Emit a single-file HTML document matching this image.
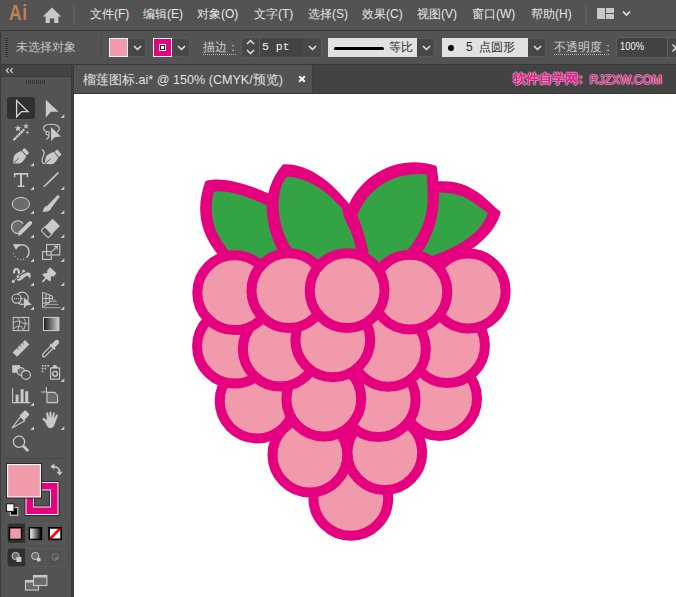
<!DOCTYPE html>
<html><head><meta charset="utf-8">
<style>
*{margin:0;padding:0;box-sizing:border-box}
html,body{width:676px;height:597px;overflow:hidden;background:#535353;font-family:"Liberation Sans",sans-serif}
.a{position:absolute}
.t{position:absolute;white-space:nowrap;line-height:1}
#menu{left:0;top:0;width:676px;height:30px;background:#535353}
#mline{left:0;top:30px;width:676px;height:1px;background:#393939}
#ctrl{left:0;top:31px;width:676px;height:33px;background:#535353}
#cline{left:0;top:64px;width:676px;height:1px;background:#393939}
#tabbar{left:73px;top:65px;width:603px;height:28px;background:#434343}
#tab{left:74px;top:65px;width:238px;height:28px;background:#535353}
#tline{left:73px;top:93px;width:603px;height:1px;background:#393939}
#canvas{left:74px;top:94px;width:602px;height:503px;background:#fff}
#gap{left:71px;top:65px;width:3px;height:532px;background:#383838;border-left:0;box-shadow:inset 1px 0 0 #383838}
#gapm{left:72px;top:65px;width:1px;height:532px;background:#414141}
#tbh{left:0;top:65px;width:71px;height:11px;background:#444444}
#tbl{left:0;top:76px;width:71px;height:1px;background:#393939}
#tbb{left:0;top:77px;width:71px;height:520px;background:#535353}
.menu{color:#e6e6e6;font-size:12px}
</style></head><body>
<div id="menu" class="a"></div>
<div id="mline" class="a"></div>
<div id="ctrl" class="a"></div>
<div id="cline" class="a"></div>
<div id="tabbar" class="a"></div>
<div id="tab" class="a"></div>
<div id="tline" class="a"></div>
<div id="gap" class="a"></div><div id="gapm" class="a"></div>
<div id="tbh" class="a"></div>
<div id="tbl" class="a"></div>
<div id="tbb" class="a"></div>
<div id="canvas" class="a"></div>

<!-- MENU -->
<div class="t" style="left:8.6px;top:3.4px;font-size:21.5px;font-weight:bold;color:#c08156;transform:scaleX(0.8);letter-spacing:1px;transform-origin:0 0">Ai</div>
<svg class="a" style="left:42px;top:7px" width="20" height="16" viewBox="0 0 20 16"><path d="M0.8 9.6 L10 0.4 L19.2 9.6 L16.4 9.6 L16.4 16 L12.2 16 L12.2 11.6 L7.8 11.6 L7.8 16 L3.6 16 L3.6 9.6 Z" fill="#c8c8c8"/></svg>
<div class="a" style="left:73px;top:5px;width:2px;height:20px;background:#5c5c5c"></div>
<div class="t menu" style="left:90px;top:8px">文件(F)</div>
<div class="t menu" style="left:143px;top:8px">编辑(E)</div>
<div class="t menu" style="left:197px;top:8px">对象(O)</div>
<div class="t menu" style="left:254px;top:8px">文字(T)</div>
<div class="t menu" style="left:308px;top:8px">选择(S)</div>
<div class="t menu" style="left:362px;top:8px">效果(C)</div>
<div class="t menu" style="left:417px;top:8px">视图(V)</div>
<div class="t menu" style="left:472px;top:8px">窗口(W)</div>
<div class="t menu" style="left:531px;top:8px">帮助(H)</div>
<div class="a" style="left:585px;top:5px;width:2px;height:20px;background:#5c5c5c"></div>
<div class="a" style="left:597px;top:8px;width:8px;height:11px;background:#c8c8c8"></div>
<div class="a" style="left:606px;top:8px;width:8px;height:5px;background:#c8c8c8"></div>
<div class="a" style="left:606px;top:14px;width:8px;height:5px;background:#c8c8c8"></div>
<svg class="a" style="left:622px;top:10px" width="9" height="7"><path d="M1 1.5 L4.5 5 L8 1.5" stroke="#e8e8e8" stroke-width="1.6" fill="none"/></svg>

<!-- CONTROL BAR -->
<div class="a" style="left:0;top:31px;width:1px;height:566px;background:#3c3c3c"></div>
<div class="a" style="left:5px;top:38px;width:3px;height:19px;background:repeating-linear-gradient(to bottom,#363636 0,#363636 1px,transparent 1px,transparent 2px)"></div>
<div class="t" style="left:16px;top:41px;font-size:12px;color:#c4c4c4">未选择对象</div>
<div class="a" style="left:101px;top:35px;width:1px;height:25px;background:#4a4a4a"></div>
<!-- fill -->
<div class="a" style="left:128px;top:38px;width:18px;height:19px;background:#474747;border-radius:0 3px 3px 0;border:1px solid #5a5a5a;border-left:none"></div>
<div class="a" style="left:109px;top:38px;width:19px;height:19px;background:#f09aaa;border:1px solid #f4f4f4"></div>
<svg class="a" style="left:133px;top:45px" width="9" height="6"><path d="M1 1 L4.5 4.5 L8 1" stroke="#e8e8e8" stroke-width="1.5" fill="none"/></svg>
<!-- stroke -->
<div class="a" style="left:172px;top:38px;width:18px;height:19px;background:#474747;border-radius:0 3px 3px 0;border:1px solid #5a5a5a;border-left:none"></div>
<div class="a" style="left:153px;top:38px;width:19px;height:19px;background:#e4007f;border:1px solid #f4f4f4"></div>
<div class="a" style="left:159px;top:44px;width:7px;height:7px;background:#fff"></div>
<div class="a" style="left:160px;top:45px;width:5px;height:5px;background:#222"></div>
<div class="a" style="left:161px;top:46px;width:3px;height:3px;background:#fff"></div>
<svg class="a" style="left:177px;top:45px" width="9" height="6"><path d="M1 1 L4.5 4.5 L8 1" stroke="#e8e8e8" stroke-width="1.5" fill="none"/></svg>
<!-- stroke weight -->
<div class="t" style="left:203px;top:41px;font-size:12px;color:#d0d0d0">描边：</div>
<div class="a" style="left:203px;top:54px;width:33px;height:1px;background:repeating-linear-gradient(to right,#b0b0b0 0,#b0b0b0 1px,transparent 1px,transparent 2px)"></div>
<div class="a" style="left:241px;top:37px;width:81px;height:21px;background:#484848;border:1px solid #5b5b5b;border-radius:3px"></div>
<div class="a" style="left:259px;top:38px;width:1px;height:19px;background:#5b5b5b"></div>
<div class="a" style="left:260px;top:38px;width:43px;height:19px;background:#434343"></div>
<svg class="a" style="left:245px;top:38px" width="11" height="18"><path d="M2 6 L5.5 2.5 L9 6 M2 12 L5.5 15.5 L9 12" stroke="#e8e8e8" stroke-width="1.4" fill="none"/></svg>
<div class="t" style="left:262px;top:41px;font-family:'Liberation Mono',monospace;font-size:11.5px;color:#f0f0f0">5 pt</div>
<svg class="a" style="left:308px;top:45px" width="9" height="6"><path d="M1 1 L4.5 4.5 L8 1" stroke="#e8e8e8" stroke-width="1.5" fill="none"/></svg>
<!-- profile -->
<div class="a" style="left:417px;top:38px;width:18px;height:19px;background:#474747;border-radius:0 3px 3px 0;border:1px solid #5a5a5a;border-left:none"></div>
<div class="a" style="left:328px;top:38px;width:89px;height:19px;background:#e1e1e1"></div>
<div class="a" style="left:334px;top:47px;width:50px;height:3px;background:#000;border-radius:1.5px"></div>
<div class="t" style="left:389px;top:41px;font-size:12px;color:#2c2c2c">等比</div>
<svg class="a" style="left:422px;top:45px" width="9" height="6"><path d="M1 1 L4.5 4.5 L8 1" stroke="#e8e8e8" stroke-width="1.5" fill="none"/></svg>
<!-- brush -->
<div class="a" style="left:528px;top:38px;width:18px;height:19px;background:#474747;border-radius:0 3px 3px 0;border:1px solid #5a5a5a;border-left:none"></div>
<div class="a" style="left:442px;top:38px;width:86px;height:19px;background:#e1e1e1"></div>
<div class="a" style="left:448px;top:45px;width:6px;height:6px;background:#000;border-radius:50%"></div>
<div class="t" style="left:466px;top:41px;font-size:12px;color:#2c2c2c">5</div>
<div class="t" style="left:479px;top:41px;font-size:12px;color:#2c2c2c">点圆形</div>
<svg class="a" style="left:533px;top:45px" width="9" height="6"><path d="M1 1 L4.5 4.5 L8 1" stroke="#e8e8e8" stroke-width="1.5" fill="none"/></svg>
<!-- opacity -->
<div class="t" style="left:554px;top:41px;font-size:12px;color:#d0d0d0">不透明度：</div>
<div class="a" style="left:554px;top:54px;width:56px;height:1px;background:repeating-linear-gradient(to right,#b0b0b0 0,#b0b0b0 1px,transparent 1px,transparent 2px)"></div>
<div class="a" style="left:616px;top:37px;width:70px;height:21px;background:#484848;border:1px solid #5e5e5e;border-radius:3px"></div>
<div class="a" style="left:617px;top:38px;width:50px;height:19px;background:#434343;border-radius:2px 0 0 2px"></div>
<div class="a" style="left:667px;top:38px;width:1px;height:19px;background:#5e5e5e"></div>
<div class="t" style="left:620.3px;top:41.2px;font-size:11.2px;color:#f4f4f4;transform:scaleX(0.84);transform-origin:0 0">100%</div>
<svg class="a" style="left:671px;top:43px" width="6" height="10"><path d="M1.5 1.5 L5 5 L1.5 8.5" stroke="#e8e8e8" stroke-width="1.4" fill="none"/></svg>

<!-- TAB BAR -->
<div class="a" style="left:312px;top:65px;width:1px;height:28px;background:#3d3d3d"></div>
<div class="t" style="left:83px;top:74px;font-size:12.6px;color:#e0e0e0">榴莲图标.ai* @ 150% (CMYK/预览)</div>
<svg class="a" style="left:298px;top:75px" width="8" height="8"><path d="M1.2 1.2 L6.8 6.8 M6.8 1.2 L1.2 6.8" stroke="#f2f2f2" stroke-width="2" fill="none"/></svg>
<div class="t" style="left:513px;top:73px;font-size:12.7px;font-weight:bold;color:#e6178a;text-shadow:1px 0 0 rgba(235,190,215,0.6),-1px 0 0 rgba(235,190,215,0.6),0 1px 0 rgba(235,190,215,0.6),0 -1px 0 rgba(235,190,215,0.6)">软件自学网</div><div class="t" style="left:574px;top:73px;font-size:12.7px;font-weight:bold;color:#e6178a;text-shadow:1px 0 0 rgba(235,190,215,0.6),-1px 0 0 rgba(235,190,215,0.6),0 1px 0 rgba(235,190,215,0.6),0 -1px 0 rgba(235,190,215,0.6)">：</div><div class="t" style="left:589.5px;top:74px;font-size:12.1px;color:#e6178a;text-shadow:1px 0 0 rgba(235,190,215,0.6),-1px 0 0 rgba(235,190,215,0.6),0 1px 0 rgba(235,190,215,0.6),0 -1px 0 rgba(235,190,215,0.6)">RJZXW.COM</div>
<!-- TOOLBAR HEADER -->
<svg class="a" style="left:5px;top:67px" width="10" height="7"><path d="M3.6 1.2 L1.4 3.5 L3.6 5.8 M7.6 1.2 L5.4 3.5 L7.6 5.8" stroke="#dcdcdc" stroke-width="1.1" fill="none"/></svg>
<div class="a" style="left:26px;top:80px;width:19px;height:4px;background:repeating-linear-gradient(to right,#363636 0,#363636 1px,transparent 1px,transparent 2px)"></div>

<!-- TOOLBAR ICONS -->
<svg class="a" style="left:0;top:0" width="72" height="597" viewBox="0 0 72 597">
<g fill="#c9c9c9" stroke="none">
<!-- row1 -->
<rect x="7" y="97" width="28" height="22" rx="3" fill="#303030"/>
<path d="M16.6 100.6 L16.6 116.8 L21.6 111.6 L28 111.6 Z" fill="none" stroke="#d4d4d4" stroke-width="1.3" stroke-linejoin="miter"/>
<path d="M45.8 99.8 L45.8 117.6 L51 111.8 L58.6 111.8 Z"/>
<!-- corner triangles -->
<path d="M64.3 114.3 V118 H60.6 Z M34 162.6 V166.3 H30.3 Z M34 186.2 V189.9 H30.3 Z M64.3 186.2 V189.9 H60.6 Z M34 210.2 V213.9 H30.3 Z M64.3 210.2 V213.9 H60.6 Z M34 234.2 V237.9 H30.3 Z M64.3 234.2 V237.9 H60.6 Z M34 258.2 V261.9 H30.3 Z M64.3 258.2 V261.9 H60.6 Z M34 282.2 V285.9 H30.3 Z M64.3 282.2 V285.9 H60.6 Z M34 306.2 V309.9 H30.3 Z M64.3 306.2 V309.9 H60.6 Z M64.3 378.2 V381.9 H60.6 Z M34 402.2 V405.9 H30.3 Z M34 426.2 V429.9 H30.3 Z M64.3 426.2 V429.9 H60.6 Z"/>
<!-- row2 magic wand -->
<path d="M12.6 139.4 L23.4 128.6 L25 130.2 L14.2 141 Z"/>
<path d="M15.4 136.6 L16.8 138.2 M17.6 134.4 L19 136 M19.8 132.2 L21.2 133.8 M22 130 L23.4 131.6" stroke="#535353" stroke-width="0.6"/>
<path d="M18.00 124.80 L18.88 127.19 L21.42 127.29 L19.43 128.86 L20.12 131.31 L18.00 129.90 L15.88 131.31 L16.57 128.86 L14.58 127.29 L17.12 127.19 Z"/>
<path d="M26.00 123.10 L26.76 125.15 L28.95 125.24 L27.24 126.60 L27.82 128.71 L26.00 127.50 L24.18 128.71 L24.76 126.60 L23.05 125.24 L25.24 125.15 Z"/>
<path d="M27.40 130.60 L27.89 132.11 L29.40 132.60 L27.89 133.09 L27.40 134.60 L26.91 133.09 L25.40 132.60 L26.91 132.11 Z"/>
<!-- lasso -->
<path d="M47 131.8 C43.6 131.2 42.2 128 44.8 125.8 C47.6 123.6 55.4 123.8 58.2 126.2 C60 127.8 59.4 130.6 57.2 132" fill="none" stroke="#c9c9c9" stroke-width="1.2"/>
<circle cx="47.6" cy="133.3" r="1.7" fill="none" stroke="#c9c9c9" stroke-width="1.1"/>
<path d="M48.8 134.8 C49.6 136.6 48.4 138 46.4 139.5" fill="none" stroke="#c9c9c9" stroke-width="1.2"/>
<path d="M51 127.1 L51.2 140.9 L54.7 137.2 L60.8 136.5 Z"/>
<!-- row3 pen -->
<g transform="translate(13.2 163.6) rotate(-44)">
<path d="M0 0 L4.6 -4.2 C6 -5.3 8.5 -5.4 10.5 -4.9 L14.6 -3.8 L14.6 3.8 L10.5 4.9 C8.5 5.4 6 5.3 4.6 4.2 Z"/>
<rect x="15.4" y="-3.4" width="3.6" height="6.8" rx="0.5"/>
<path d="M0.8 0 L7.6 0" stroke="#535353" stroke-width="0.9"/>
</g>
<g transform="translate(44.6 163.8) rotate(-38)">
<path d="M0 0 L4.6 -4.2 C6 -5.3 8.5 -5.4 10.5 -4.9 L14.6 -3.8 L14.6 3.8 L10.5 4.9 C8.5 5.4 6 5.3 4.6 4.2 Z"/>
<rect x="15.4" y="-3.4" width="3.6" height="6.8" rx="0.5"/>
<path d="M0.8 0 L7.6 0" stroke="#535353" stroke-width="0.9"/>
</g>
<path d="M41.8 149.4 C43.8 150.6 44.8 152.6 43.6 155.2 C42 158.4 41.4 161.4 43.2 163.2 L44.6 163.8" fill="none" stroke="#c9c9c9" stroke-width="1.2"/>
<!-- row4 type -->
<path d="M13.9 173 H28.2 V177.2 H26.8 V174.8 H22 V185.6 H24.4 V187.1 H17.7 V185.6 H20.1 V174.8 H15.3 V177.2 H13.9 Z"/>
<path d="M43.8 186.8 L58.4 172.6" stroke="#c9c9c9" stroke-width="1.6"/>
<!-- row5 ellipse -->
<ellipse cx="20.9" cy="204" rx="8.6" ry="6.6" fill="#6b6b6b" stroke="#d0d0d0" stroke-width="1"/>
<path d="M47.6 205.6 L57.2 195.6 C58.2 194.6 60.2 195.8 59.4 197.2 L50.9 208.6 Z"/>
<path d="M42.8 212 C43.2 208.6 45 205.4 48.2 205.4 C50.4 205.6 51.8 207.6 50.6 209.6 C49 211.8 45.8 212 42.8 212 Z"/>
<!-- row6 shaper -->
<path d="M20 233 A6.3 6.3 0 1 1 23.2 223.8" fill="#6b6b6b" stroke="#d0d0d0" stroke-width="1.1"/>
<path d="M18.2 236.2 L18.8 231.6 L28.6 221.8 C29.6 220.8 31.4 220.8 32 222.2 C32.4 223.2 32 224 31.2 224.8 L21.4 234.6 Z"/>
<!-- eraser -->
<path d="M52.6 218.8 L59.9 226.1 L52 234 L44.7 226.7 Z"/>
<path d="M44.7 226.7 L52 234 L49.2 236.8 C48.6 237.4 47.8 237.4 47.2 236.8 L42 231.6 C41.4 231 41.4 230.2 42 229.6 Z" fill="none" stroke="#c9c9c9" stroke-width="1.1"/>
<!-- row7 rotate -->
<path d="M16.2 247.4 C19.4 244 24.6 243.8 27.4 247.2 C30 250.6 29.2 255.4 26.4 257.8" fill="none" stroke="#c9c9c9" stroke-width="1.4"/>
<path d="M13 244.2 L19.8 244 L16 250 Z"/>
<g fill="#c9c9c9"><circle cx="13.6" cy="253.6" r="0.65"/><circle cx="15" cy="256.6" r="0.65"/><circle cx="17.6" cy="258.8" r="0.65"/><circle cx="20.6" cy="259.6" r="0.65"/><circle cx="23.6" cy="259.2" r="0.65"/></g>
<!-- scale -->
<rect x="46.6" y="244.6" width="13.2" height="10.4" fill="none" stroke="#c9c9c9" stroke-width="1.1"/>
<rect x="42.6" y="251.6" width="8.6" height="7.8" fill="none" stroke="#c9c9c9" stroke-width="1.1"/>
<path d="M52 251.4 L57 246.6 M54 246.4 H57.2 V249.6" fill="none" stroke="#c9c9c9" stroke-width="1.1"/>
<!-- row8 puppet warp -->
<path d="M14.2 273.2 C13.6 270.6 14.9 269 16.7 269.2 C18.7 269.4 19.3 271.6 18.9 274.6" fill="none" stroke="#c9c9c9" stroke-width="2.2"/>
<path d="M16.3 275.8 C19 275.3 22 274.6 25 273.2 C27 272.4 29.2 272.2 30.2 273.6 C31 275 30.8 277.4 29.9 278.8 C29.4 277.4 28.6 276.2 27.4 276 C25.4 275.8 24 278 21.6 279.8 C19.8 281 17.4 281 16.4 279.4 C15.8 278.4 15.7 277 16.3 275.8 Z"/>
<path d="M13.3 281.4 L23.5 271.3" stroke="#535353" stroke-width="2.4"/>
<path d="M13.3 281.4 L23.5 271.3" stroke="#c9c9c9" stroke-width="0.9"/>
<rect x="12" y="280.2" width="2.6" height="2.6" fill="#c9c9c9"/>
<circle cx="18" cy="276.6" r="1.9" fill="#c9c9c9" stroke="#535353" stroke-width="0.9"/>
<circle cx="23.6" cy="271.2" r="1.4" fill="#c9c9c9"/>
<!-- pin -->
<g transform="translate(42.4 282) rotate(-47)">
<rect x="0" y="-0.8" width="6" height="1.6"/>
<path d="M5.2 -5 L7 -5 L9.6 -2.8 L11 -2.8 L11 -4.4 L16 -4.4 L16 4.4 L11 4.4 L11 2.8 L9.6 2.8 L7 5 L5.2 5 Z"/>
</g>
<!-- row9 shape builder -->
<circle cx="16.6" cy="298.6" r="4.6" fill="none" stroke="#d0d0d0" stroke-width="1.1"/>
<path d="M17.6 294.2 A6.1 6.1 0 1 1 18.6 303.2" fill="none" stroke="#d0d0d0" stroke-width="1.1"/>
<g fill="#d8d8d8"><rect x="13.9" y="298.2" width="1" height="1"/><rect x="15.9" y="298.2" width="1" height="1"/><rect x="17.9" y="298.2" width="1" height="1"/><rect x="19.9" y="298.2" width="1" height="1"/><rect x="21.9" y="298.2" width="1" height="1"/></g>
<path d="M23.8 297.2 L23.8 308.4 L26.6 305.4 L31.8 304.8 Z"/>
<!-- perspective grid -->
<path d="M42.6 292.4 V307.6 L52.4 300.2 M42.6 292.4 L52.4 296 M46 293.6 V305 M49.4 294.8 V302.6 M52.4 296 V300.2 M42.6 298.4 H52.4 M42.6 303.2 L49.4 302.6" fill="none" stroke="#c9c9c9" stroke-width="1"/>
<path d="M51.4 302.2 L55 299 L57.6 302.2 Z" fill="#8a8a8a"/>
<path d="M45 304.4 H58.4 M42.6 307.7 H60.4" stroke="#a8a8a8" stroke-width="1"/>
<!-- row10 mesh -->
<rect x="13.2" y="317.4" width="15.6" height="13.2" fill="none" stroke="#c9c9c9" stroke-width="1"/>
<path d="M17.6 317.4 C19.6 320 20 323.5 18.9 326 C18.3 327.6 18.2 329 18.3 330.6 M13.4 322.8 C16 321 19 320.6 21.2 322 C22.6 323 24 324 28.6 324 M13.4 329 C15.6 326.6 18.6 325.8 20.8 326.6 C22.2 327.2 23 328.4 23.4 330.6 M23.2 317.4 C25 319.4 25.8 322.6 25 325.6 C24.6 327.4 23.8 329 23.6 330.6" fill="none" stroke="#c9c9c9" stroke-width="0.9"/>
<!-- gradient -->
<defs><linearGradient id="gr" x1="0" x2="1" y1="0" y2="0"><stop offset="0" stop-color="#1a1a1a"/><stop offset="1" stop-color="#d0d0d0"/></linearGradient>
<linearGradient id="gr2" x1="0" x2="1" y1="0" y2="0"><stop offset="0" stop-color="#ffffff"/><stop offset="1" stop-color="#000000"/></linearGradient></defs>
<rect x="43.5" y="317.4" width="15.4" height="13.2" fill="url(#gr)" stroke="#d0d0d0" stroke-width="1"/>
<!-- row11 ruler -->
<path d="M25 340 L29.4 344.4 L17 356.8 L12.6 352.4 Z"/>
<path d="M17.2 348 L18.8 349.6 M19.8 345.4 L21.4 347 M22.4 342.8 L24 344.4" stroke="#535353" stroke-width="1"/>
<!-- eyedropper -->
<path d="M53 348.4 L45 356.4 C44.2 357.2 42.4 357.2 42.6 355.2 L43.4 353.4 L51.2 345.6" fill="none" stroke="#c9c9c9" stroke-width="1.2"/>
<path d="M49.6 345.2 L54.4 350 L55.6 348.8 L54.6 347.8 L57.6 344.8 C59.4 343 59.6 341.4 58.4 340.4 C57.2 339.4 55.8 339.6 54.2 341.4 L51.2 344.4 L50.4 343.6 Z"/>
<!-- row12 blend -->
<rect x="12.2" y="365.2" width="7.8" height="7.6"/>
<circle cx="20.8" cy="371.4" r="3.8" fill="#6b6b6b" stroke="#c9c9c9" stroke-width="1.1"/>
<circle cx="26" cy="375" r="4.4" fill="#535353" stroke="#d0d0d0" stroke-width="1.1"/>
<!-- symbol sprayer -->
<g><rect x="41.8" y="365" width="1.6" height="1.6"/><rect x="44.6" y="365" width="1.6" height="1.6"/><rect x="47.4" y="365" width="1.6" height="1.6"/><rect x="41.8" y="367.8" width="1.6" height="1.6"/><rect x="44.6" y="367.8" width="1.6" height="1.6"/><rect x="41.8" y="370.6" width="1.6" height="1.6"/></g>
<rect x="50.6" y="368" width="9" height="11.2" fill="none" stroke="#c9c9c9" stroke-width="1.1"/>
<path d="M52 368 V366.4 H53.4 V365 H56.4 V366.4 H57.6 V368 Z"/>
<circle cx="55.1" cy="373.8" r="2.4" fill="none" stroke="#c9c9c9" stroke-width="1.4"/>
<!-- row13 graph -->
<path d="M12.6 388.2 V402.6 H30.2" fill="none" stroke="#c9c9c9" stroke-width="1.1"/>
<rect x="15.6" y="394.6" width="3" height="8"/><rect x="20.6" y="389.2" width="3" height="13.4"/><rect x="25.2" y="391.2" width="3" height="11.4"/>
<!-- artboard -->
<path d="M41.2 392 H46.4 M46.4 387 V392" stroke="#c9c9c9" stroke-width="1.1"/>
<path d="M47 392.4 H54.6 L57.6 395.4 V402.6 H47 Z" fill="#6b6b6b" stroke="#c9c9c9" stroke-width="1.1"/>
<!-- row14 knife/pencil -->
<path d="M12 428 L20.6 416.6 L24.8 420.8 Z" fill="none" stroke="#c9c9c9" stroke-width="1.1" stroke-linejoin="round"/>
<path d="M19.6 415.6 L24.2 411 C24.8 410.4 25.6 410.4 26.2 411 L28.8 413.6 C29.4 414.2 29.4 415 28.8 415.6 L24.2 420.2 Z"/>
<!-- hand -->
<path d="M45.6 422.8 L42.8 419.8 C42 419 43 417.4 44.4 418.2 L47 420 L46.2 413.6 C46 412.2 47.8 411.8 48.2 413.2 L49.2 418 L49.4 412.6 C49.4 411.2 51.2 411.2 51.4 412.6 L51.8 418 L53 413.2 C53.4 411.8 55 412.2 54.8 413.6 L54 418.6 L56 415.2 C56.6 414 58.4 414.6 57.8 416 L55.2 423 C54.2 426.6 52.4 428.2 49.8 428.2 C47.8 428.2 46.6 425 45.6 422.8 Z"/>
<!-- row15 zoom -->
<circle cx="19" cy="441.8" r="5.6" fill="none" stroke="#c9c9c9" stroke-width="1.3"/>
<path d="M23.2 446 L28.2 451" stroke="#c9c9c9" stroke-width="2.6"/>
</g>
<!-- colors separator -->
<rect x="6" y="458" width="60" height="1" fill="#4a4a4a"/>
<!-- stroke swatch -->
<rect x="24.5" y="481" width="35" height="35" fill="#2a2a2a"/>
<rect x="25.5" y="482" width="33" height="33" fill="#f2f2f2"/>
<rect x="26.5" y="483" width="31" height="31" fill="#e4007f"/>
<rect x="33" y="489.5" width="18" height="18" fill="#f2f2f2"/>
<rect x="34" y="490.5" width="16" height="16" fill="#2e2e2e"/>
<rect x="35" y="491.5" width="14" height="14" fill="#535353"/>
<!-- fill swatch -->
<rect x="6" y="463" width="36" height="35.5" fill="#2a2a2a"/>
<rect x="7" y="464" width="34" height="33.5" fill="#f2f2f2"/>
<rect x="8.2" y="465.2" width="31.6" height="31.1" fill="#f09aaa"/>
<!-- swap arrow -->
<path d="M53.4 466.6 C57 466.6 59.6 468.8 59.6 472.2" fill="none" stroke="#c9c9c9" stroke-width="1.8"/>
<path d="M50.4 466.6 L54.4 463.6 V469.6 Z M59.6 475.6 L56.6 471.8 H62.6 Z" fill="#c9c9c9"/>
<!-- default colors -->
<rect x="10.2" y="507.6" width="7.6" height="7.6" fill="#000" stroke="#e0e0e0" stroke-width="1"/>
<rect x="6.4" y="503.8" width="7.6" height="7.6" fill="#fff" stroke="#111" stroke-width="1"/>
<!-- color mode group -->
<rect x="7" y="523.5" width="57.6" height="19.6" rx="3" fill="none" stroke="#5c5c5c" stroke-width="1"/>
<path d="M7.5 526.5 A3 3 0 0 1 10.5 523.5 H25.8 V543.1 H10.5 A3 3 0 0 1 7.5 540.1 Z" fill="#303030"/>
<path d="M25.8 523.5 V543.1 M45.6 523.5 V543.1" stroke="#5c5c5c" stroke-width="1"/>
<rect x="9.5" y="527.8" width="12" height="11.6" fill="#f09aaa" stroke="#000" stroke-width="1.4"/>
<rect x="29.4" y="527.8" width="12" height="11.6" fill="url(#gr2)" stroke="#000" stroke-width="1.4"/>
<rect x="49.2" y="527.8" width="12" height="11.6" fill="#fff" stroke="#000" stroke-width="1.4"/>
<path d="M50 539 L60.4 528.2" stroke="#f00" stroke-width="2.6"/>
<rect x="49.2" y="527.8" width="12" height="11.6" fill="none" stroke="#000" stroke-width="1.4"/>
<!-- draw mode group -->
<rect x="7" y="548.5" width="57.6" height="18" rx="3" fill="none" stroke="#5c5c5c" stroke-width="1"/>
<path d="M7.5 551.5 A3 3 0 0 1 10.5 548.5 H25.8 V566.5 H10.5 A3 3 0 0 1 7.5 563.5 Z" fill="#303030"/>
<path d="M25.8 548.5 V566.5 M45.6 548.5 V566.5" stroke="#5c5c5c" stroke-width="1"/>
<circle cx="15.6" cy="556" r="3.6" fill="#6b6b6b" stroke="#c9c9c9" stroke-width="1"/>
<rect x="16.4" y="557" width="5" height="5" fill="#c9c9c9"/>
<circle cx="35.2" cy="556" r="3.6" fill="#6b6b6b" stroke="#c9c9c9" stroke-width="1"/>
<rect x="37" y="557.8" width="3.6" height="3.6" fill="#c9c9c9"/>
<circle cx="55.2" cy="557" r="3.2" fill="none" stroke="#7a7a7a" stroke-width="1"/>
<path d="M55.2 557 H58.4 A3.2 3.2 0 0 1 55.2 560.2 Z" fill="#7a7a7a"/>
<!-- screen mode -->
<rect x="25.5" y="580.5" width="13" height="9.6" fill="#6b6b6b" stroke="#c9c9c9" stroke-width="1.1"/>
<rect x="33.5" y="575.5" width="13.4" height="10" fill="#6b6b6b" stroke="#c9c9c9" stroke-width="1.1"/>
<rect x="33.5" y="575.5" width="13.4" height="2" fill="#c9c9c9"/>
<rect x="25.5" y="580.5" width="8" height="2" fill="#c9c9c9"/>
</svg>

<!-- BERRY -->
<svg class="a" style="left:0;top:0" width="676" height="597" viewBox="0 0 676 597">
<path fill="#e4007f" d="M205.3 181.2 C227.8 174.2 266.9 192.4 278.0 198.0 L300.0 230.0 L300.0 270.0 L240.0 268.0 L224.0 262.0 C216.1 251.7 189.0 226.3 205.3 181.2 Z"/>
<path fill="#33a345" d="M213.8 191.8 C234.6 188.0 270.9 207.6 276.0 210.0 L295.0 235.0 L295.0 265.0 L245.0 266.0 L236.0 258.0 C226.1 248.4 204.8 226.8 213.8 191.8 Z"/>
<path fill="#e4007f" d="M500.8 211.9 C488.8 204.2 471.3 174.1 428.0 183.0 L410.0 200.0 L405.0 240.0 L425.0 275.0 L455.0 272.0 L460.0 256.0 C480.4 245.4 496.6 229.1 500.8 211.9 Z"/>
<path fill="#33a345" d="M488.0 212.7 C475.8 206.8 467.8 189.7 430.0 193.0 L415.0 205.0 L410.0 240.0 L420.0 262.0 L425.0 258.0 C462.8 246.9 482.7 229.9 488.0 212.7 Z"/>
<path fill="#e4007f" d="M282.9 164.4 C317.1 163.2 341.7 195.7 349.1 203.9 C362.9 215.3 372.7 269.6 370.0 266.0 L355.0 300.0 L300.0 290.0 L283.0 260.0 C278.0 250.9 249.3 203.9 282.9 164.4 Z"/>
<path fill="#33a345" d="M287.9 176.4 C315.7 179.2 332.7 198.2 342.0 208.2 C349.6 237.9 351.8 217.7 358.0 262.0 L350.0 290.0 L305.0 285.0 L300.0 258.0 C271.3 231.2 276.0 183.5 287.9 176.4 Z"/>
<path fill="#e4007f" d="M436.5 166.0 C403.3 154.6 365.4 169.9 349.1 203.9 C336.7 223.5 346.7 204.5 360.0 262.0 L380.0 290.0 L412.0 275.0 L415.0 262.0 C439.8 230.7 442.2 200.5 436.5 166.0 Z"/>
<path fill="#33a345" d="M426.6 174.4 C373.9 170.1 358.0 212.2 357.4 216.0 C369.7 244.5 370.7 272.5 372.0 265.0 L385.0 280.0 L402.0 265.0 L402.0 257.0 C429.1 226.6 429.2 206.6 426.6 174.4 Z"/>
<g stroke="#e4007f" stroke-width="10" fill="#f19aab">
<circle cx="350.8" cy="498.3" r="37.4"/>
<circle cx="384.8" cy="452.6" r="37.4"/>
<circle cx="309.9" cy="455.1" r="37.4"/>
<circle cx="439.6" cy="398.6" r="37.4"/>
<circle cx="378.2" cy="399.7" r="37.4"/>
<circle cx="257.1" cy="401.1" r="37.4"/>
<circle cx="323.8" cy="399.0" r="37.4"/>
<circle cx="234.5" cy="346.2" r="37.4"/>
<circle cx="447.5" cy="345.6" r="37.4"/>
<circle cx="280.3" cy="349.1" r="37.4"/>
<circle cx="388.4" cy="349.3" r="37.4"/>
<circle cx="332.8" cy="339.8" r="37.4"/>
<circle cx="234.7" cy="292.7" r="37.4"/>
<circle cx="468.2" cy="291.0" r="37.4"/>
<circle cx="288.9" cy="290.6" r="37.4"/>
<circle cx="409.9" cy="292.1" r="37.4"/>
<circle cx="347.1" cy="290.6" r="37.4"/>
</g></svg>
<!-- /BERRY -->
</body></html>
